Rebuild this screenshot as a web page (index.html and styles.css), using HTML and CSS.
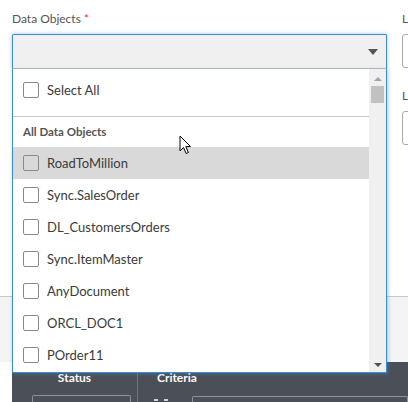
FILE: index.html
```html
<!DOCTYPE html>
<html lang="en">
<head>
  <meta charset="UTF-8">
  <title>Data Objects</title>
  <link rel="stylesheet" href="styles.css">
</head>
<body>

  <div class="top">
    <div class="field">
      <label class="lbl">Data Objects <span class="req">*</span></label>
      <div class="combo">
        <div class="select">
          <span class="caret"></span>
        </div>
        <div class="menu">
          <div class="list">
            <div class="opt all"><span class="chk"></span>Select All</div>
            <div class="group">All Data Objects</div>
            <div class="opt hover"><span class="chk"></span>RoadToMillion</div>
            <div class="opt"><span class="chk"></span>Sync.SalesOrder</div>
            <div class="opt"><span class="chk"></span>DL_CustomersOrders</div>
            <div class="opt"><span class="chk"></span>Sync.ItemMaster</div>
            <div class="opt"><span class="chk"></span>AnyDocument</div>
            <div class="opt"><span class="chk"></span>ORCL_DOC1</div>
            <div class="opt"><span class="chk"></span>POrder11</div>
          </div>
          <div class="scroll">
            <span class="arr up"></span>
            <span class="thumb"></span>
            <span class="track"></span>
            <span class="arr down"></span>
          </div>
        </div>
      </div>
    </div>

    <div class="side">
      <label class="lbl">L</label>
      <div class="box"></div>
      <label class="lbl second">L</label>
      <div class="box"></div>
    </div>
  </div>

  <div class="strip"></div>

  <div class="grid">
    <div class="col status">
      <div class="head">Status</div>
      <div class="cell"><div class="inp small"></div></div>
    </div>
    <div class="col criteria">
      <div class="head">Criteria</div>
      <div class="cell">
        <span class="ticks"><i></i><i></i></span>
        <div class="inp wide"></div>
      </div>
    </div>
  </div>

  <svg class="cursor" width="13" height="20" viewBox="0 0 13 20">
    <path d="M1 1 L1 16 L4.5 12.5 L7.2 18.5 L9.4 17.5 L6.8 11.6 L11.6 11.6 Z" fill="#fff" stroke="#000" stroke-width="1" stroke-linejoin="round"/>
  </svg>

</body>
</html>
```

FILE: styles.css
```css
*{box-sizing:border-box;margin:0;padding:0}
body{
  font-family:Lato,'Open Sans',sans-serif;background:#fff;color:#333;
  width:408px;height:402px;overflow:hidden;position:relative
}
.top{
  display:flex;gap:15px;height:297px;padding:10px 0 0 12px;
  border-bottom:1px solid #c9c9c9
}
.lbl{display:block;font-size:12px;line-height:18px;color:#555;margin-bottom:6px;white-space:nowrap}
.req{color:#e0403a}
.field{width:375px;flex:none}
.combo{position:relative;z-index:2}
.select{
  height:35px;background:#f0f0f0;border:1px solid #3b8bd0;border-bottom-color:#bdbdbd;
  border-radius:2px 2px 0 0;box-shadow:0 0 4px rgba(59,139,208,.45);position:relative
}
.caret{
  position:absolute;right:8px;top:14px;width:0;height:0;
  border-left:5px solid transparent;border-right:5px solid transparent;border-top:6px solid #555
}
.menu{
  position:absolute;top:100%;left:0;width:375px;height:304px;background:#fff;
  border:1px solid #3b8bd0;border-top:none;box-shadow:1px 1px 4px rgba(59,139,208,.45);
  display:flex
}
.list{flex:1;overflow:hidden}
.opt{display:flex;align-items:center;height:32px;padding-left:10px;font-size:13px;color:#3a3a3a;white-space:nowrap}
.opt.all{height:48px;padding-bottom:6px;border-bottom:1px solid #c6c6c6}
.opt.hover{background:#d9d9d9}
.chk{width:16px;height:16px;border:1px solid #8a8a8a;border-radius:2px;margin-right:8px;flex:none}
.group{height:30px;line-height:30px;padding-left:10px;font-size:11.5px;font-weight:700;color:#555}
.scroll{width:17px;background:#f0f0f0;display:flex;flex-direction:column;align-items:center}
.arr{width:0;height:0;border-left:4px solid transparent;border-right:4px solid transparent}
.arr.up{border-bottom:4px solid #a3a3a3;margin-top:8px}
.arr.down{border-top:4px solid #505050;margin-bottom:5px}
.thumb{width:13px;height:17px;background:#c1c1c1;margin-top:5px}
.track{flex:1}
.side{flex:none}
.side .lbl.second{margin-top:19px}
.box{width:120px;height:34px;border:1px solid #aaa;border-radius:3px}
.strip{height:65px;background:#f4f4f4}
.grid{display:flex;margin-left:12px;height:40px;background:#4b4f57;color:#fff}
.col{display:flex;flex-direction:column}
.status{width:126px;border-right:1px solid #71757c}
.criteria{flex:1}
.head{font-size:12px;font-weight:700;line-height:16px;padding-top:8px;height:33px}
.status .head{text-align:center}
.criteria .head{padding-left:19px}
.cell{display:flex;flex:1}
.inp{border:1px solid #8e9299;border-bottom:none;border-radius:2px 2px 0 0}
.inp.small{width:99px;margin-left:20px}
.ticks{display:flex;gap:6px;padding:4px 0 0 16px;width:54px}
.ticks i{display:block;width:4px;height:2px;background:#cfd1d4}
.inp.wide{flex:1;margin-top:1px}
.cursor{position:absolute;left:179px;top:135px;z-index:5}
```
